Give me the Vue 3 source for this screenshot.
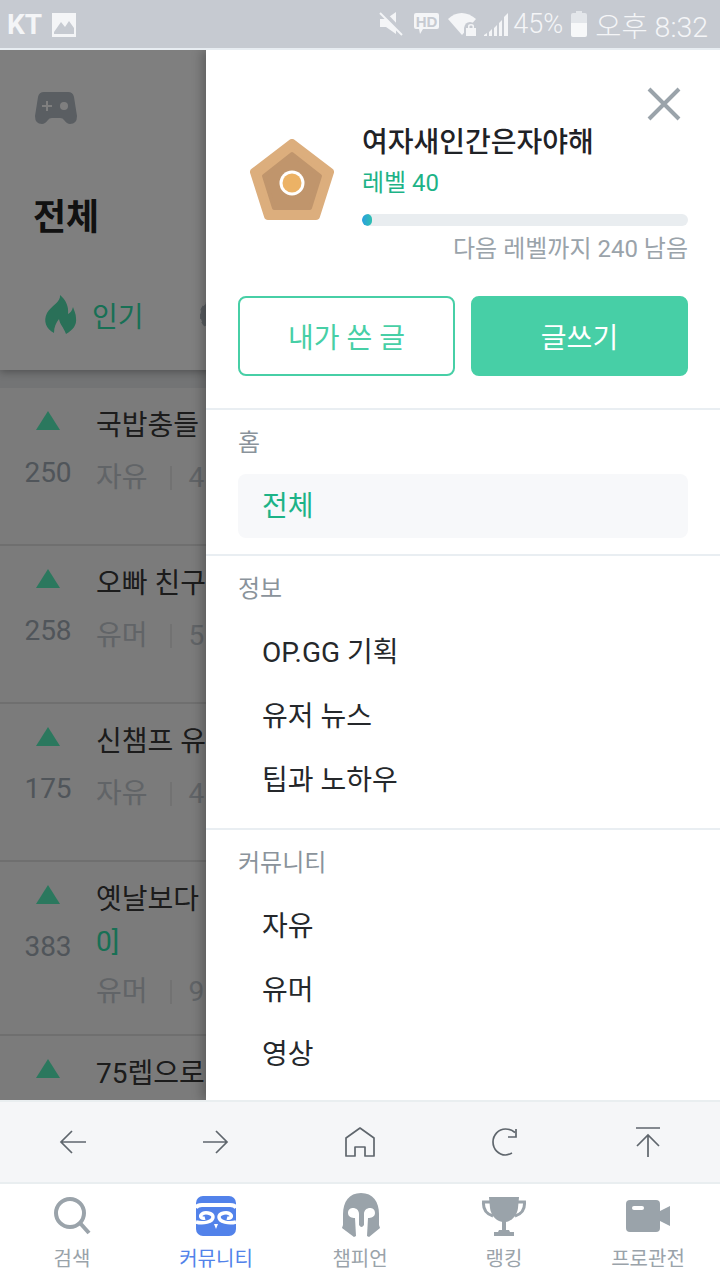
<script setup>
import { ref } from "vue";

const rows = ref([
  { score: 250, title: "국밥충들", board: "자유", count: "4" },
  { score: 258, title: "오빠 친구", board: "유머", count: "5" },
  { score: 175, title: "신챔프 유", board: "자유", count: "4" },
  { score: 383, title: "옛날보다", extra: "0]", board: "유머", count: "9" },
  { score: 0, title: "75렙으로", board: "", count: "" },
]);

const sections = ref([
  { name: "홈", items: [{ label: "전체", active: true }] },
  { name: "정보", items: [{ label: "OP.GG 기획" }, { label: "유저 뉴스" }, { label: "팁과 노하우" }] },
  { name: "커뮤니티", items: [{ label: "자유" }, { label: "유머" }, { label: "영상" }] },
]);

const tabs = ref([
  { id: "search", label: "검색" },
  { id: "community", label: "커뮤니티", active: true },
  { id: "champion", label: "챔피언" },
  { id: "ranking", label: "랭킹" },
  { id: "pro", label: "프로관전" },
]);
</script>

<template>
  <div class="phone">
    <div class="status">
      <span class="carrier">KT</span>
      <svg class="st-pic" width="24" height="24" viewBox="0 0 24 24">
        <path fill-rule="evenodd" fill="#f4f5f7" d="M0 0H24V24H0ZM2 21H22V15L17 8L13 14L9 9L2 19Z" />
      </svg>
      <div class="status-right">
        <svg width="24" height="24" viewBox="0 0 24 24">
          <path fill="#f4f5f7" d="M1 7H7L17 0V22L7 15H1Z" />
          <path stroke="#c6cad1" stroke-width="4" d="M3 -1L24 21" />
          <path stroke="#f4f5f7" stroke-width="2" d="M1 1L23 23" />
        </svg>
        <svg class="st-hd" width="25" height="22" viewBox="0 0 25 22">
          <path fill="#f4f5f7" d="M2 0H23Q25 0 25 2V14Q25 16 23 16H9L6 21L5 16H2Q0 16 0 14V2Q0 0 2 0Z" />
          <text x="12.500" y="13.500" text-anchor="middle" class="hd-text">HD</text>
        </svg>
        <svg class="st-wifi" width="30" height="24" viewBox="0 0 30 24">
          <path fill="#f4f5f7" d="M1 7C9 -1 20 -1 29 7L15 23Z" />
          <path fill="#c6cad1" d="M17 16Q18 10 23 10Q28 10 29 16V24H17Z" />
          <path fill="#f4f5f7" d="M19 16H29V24H19ZM21 16V14Q21 12 24 12Q27 12 27 14V16H25.500V14.500Q25.500 13.500 24 13.500Q22.500 13.500 22.500 14.500V16Z" />
        </svg>
        <svg class="st-signal" width="24" height="24" viewBox="0 0 24 24">
          <path fill="#f4f5f7" d="M0 24H3V21L0 23ZM5 24H8V17L5 20ZM10 24H13V13L10 16ZM15 24H18V8L15 11ZM20 24H24V1L20 5Z" />
        </svg>
        <span class="pct">45%</span>
        <svg width="16" height="26" viewBox="0 0 16 26">
          <path fill="#e3e6ea" d="M5 0H11V2H14Q16 2 16 4V12H0V4Q0 2 2 2H5Z" />
          <path fill="#f7f8f9" d="M0 12H16V24Q16 26 14 26H2Q0 26 0 24Z" />
        </svg>
        <span class="clock">오후 8:32</span>
      </div>
    </div>
    <div class="status-line"></div>

    <div class="stage">
      <div class="page">
        <header class="page-head">
          <svg class="pad" width="42" height="32" viewBox="0 0 42 32">
            <path fill="#b4bcc4" d="M9 0H33Q38 0 39 5L42 24Q42 32 35 32Q32 32 29 28Q28 26 25 26H17Q14 26 13 28Q10 32 7 32Q0 32 0 24L3 5Q4 0 9 0Z" />
            <path fill="#fff" d="M7 13H11V9H13V13H17V15H13V19H11V15H7Z" />
            <circle cx="29" cy="14" r="4" fill="#fff" />
          </svg>
          <h1>전체</h1>
          <div class="page-tabs">
            <svg width="36" height="42" viewBox="0 0 36 42">
              <path fill="#54e0b0" d="M17 1C18 8 8 12 4 19C0 27 3 35 11 39C11 33 13 29 16 25C17 31 20 32 23 40C30 36 34 31 33 24C33 20 31 16 30 13C29 17 27 19 25 20C26 13 23 6 17 1Z" />
            </svg>
            <span class="tab-on">인기</span>
            <svg class="gear" width="30" height="30" viewBox="0 0 30 30">
              <circle cx="15" cy="15" r="11" fill="none" stroke="#b4bcc4" stroke-width="7" />
              <circle cx="15" cy="15" r="14" fill="none" stroke="#b4bcc4" stroke-width="3" stroke-dasharray="5 3" />
            </svg>
          </div>
        </header>
        <div class="list">
          <article v-for="r in rows" :key="r.title" class="row">
            <div class="vote">
              <svg width="24" height="19" viewBox="0 0 24 19"><path fill="#56f0bc" d="M12 0L24 19H0Z" /></svg>
              <span v-if="r.score" class="score">{{ r.score }}</span>
            </div>
            <div class="body">
              <p class="title">{{ r.title }}</p>
              <p v-if="r.extra" class="title extra">{{ r.extra }}</p>
              <p class="meta">
                <span>{{ r.board }}</span><i></i><span>{{ r.count }}</span>
              </p>
            </div>
          </article>
        </div>
      </div>
      <div class="dim"></div>

      <aside class="drawer">
        <svg class="close" width="34" height="34" viewBox="0 0 34 34">
          <path stroke="#9aa3aa" stroke-width="4" d="M2 2L32 32M32 2L2 32" />
        </svg>
        <div class="profile">
          <div class="who">
            <svg class="badge" width="84" height="81" viewBox="0 0 84 81">
              <path fill="#dcae7d" stroke="#dcae7d" stroke-width="8" stroke-linejoin="round" d="M42 4L80 33L66 77H18L4 33Z" />
              <path fill="#c0956c" stroke="#c0956c" stroke-width="4" stroke-linejoin="round" d="M42 15L70 37L60 69H24L14 37Z" />
              <circle cx="42" cy="44" r="12.500" fill="#fff" />
              <circle cx="42" cy="44" r="9.500" fill="#ecb265" />
            </svg>
            <div class="who-text">
              <div class="nick">여자새인간은자야해</div>
              <div class="level">레벨 40</div>
              <div class="bar"><div class="bar-fill" :style="{ width: '10px' }"></div></div>
              <div class="next">다음 레벨까지 240 남음</div>
            </div>
          </div>
          <div class="btns">
            <button class="btn ghost">내가 쓴 글</button>
            <button class="btn solid">글쓰기</button>
          </div>
        </div>
        <section v-for="s in sections" :key="s.name" class="sec">
          <div class="sec-name">{{ s.name }}</div>
          <ul>
            <li v-for="it in s.items" :key="it.label" :class="{ on: it.active }">{{ it.label }}</li>
          </ul>
        </section>
      </aside>
    </div>

    <div class="toolbar">
      <svg width="30" height="30" viewBox="0 0 30 30" fill="none" stroke="#5f666d" stroke-width="1.700">
        <path d="M29 15H4M15 4L4 15L15 26" />
      </svg>
      <svg width="30" height="30" viewBox="0 0 30 30" fill="none" stroke="#5f666d" stroke-width="1.700">
        <path d="M2 15H26M15 4L26 15L15 26" />
      </svg>
      <svg width="30" height="30" viewBox="0 0 30 30" fill="none" stroke="#5f666d" stroke-width="1.700" stroke-linejoin="round">
        <path d="M15 1L29 11V29H20V20H10V29H1V11Z" />
      </svg>
      <svg width="30" height="30" viewBox="0 0 30 30" fill="none" stroke="#5f666d" stroke-width="1.700">
        <path d="M26 5.500C23 3 20 2 16.500 2C9.500 2 4 8 4 15C4 22 9.500 28 16.500 28C19 28 21 27 23 26" />
        <path d="M27 2V10H19" />
      </svg>
      <svg width="30" height="32" viewBox="0 0 30 32" fill="none" stroke="#5f666d" stroke-width="1.700">
        <path d="M3 2H27M15 31V9M4 20L15 9L26 20" />
      </svg>
    </div>

    <nav class="tabbar">
      <div v-for="t in tabs" :key="t.id" class="tab" :class="{ active: t.active }">
        <svg width="48" height="48" viewBox="0 0 48 48">
          <template v-if="t.id === 'search'">
            <circle cx="22" cy="21" r="14" fill="none" stroke="#9aa3aa" stroke-width="4" />
            <path stroke="#9aa3aa" stroke-width="4" d="M32 31L41 41" />
          </template>
          <template v-else-if="t.id === 'community'">
            <rect x="4" y="4" width="40" height="40" rx="7" fill="#5282ea" />
            <path fill="none" stroke="#fff" stroke-width="4" d="M4 16Q5 13 10 13H38Q43 13 44 16" />
            <path fill="none" stroke="#fff" stroke-width="3.500" d="M4 30C11 32 21 30 21 25C21 21 12 19 9 23C8 25 10 27 13 26" />
            <path fill="none" stroke="#fff" stroke-width="3.500" d="M44 30C37 32 27 30 27 25C27 21 36 19 39 23C40 25 38 27 35 26" />
            <path fill="#fff" d="M22 32H26L24 37Z" />
          </template>
          <template v-else-if="t.id === 'champion'">
            <path fill="#9aa3aa" d="M25 1C13 1 7 10 7 22L7 33L6 36L18 45L20 44L19 26C16 26 12 25 12 21C12 17 15 16 17 16C20 16 23 18 23 22L23 33Q25.500 37 28 33L28 22C28 18 31 16 34 16C36 16 39 17 39 21C39 25 35 26 32 26L31 44L33 45L44 36L43 33L43 22C43 10 37 1 25 1Z" />
          </template>
          <template v-else-if="t.id === 'ranking'">
            <path fill="#9aa3aa" d="M9 5H39L38 16C37 24 31 30 24 30C17 30 11 24 10 16Z" />
            <path fill="none" stroke="#9aa3aa" stroke-width="3" d="M10 10H3.500C3 17 6 22 13 24M38 10H44.500C45 17 42 22 35 24" />
            <path fill="#9aa3aa" d="M22 29H26V38H29L30 40H34V44H14V40H18L19 38H22Z" />
          </template>
          <template v-else>
            <rect x="2" y="8" width="34" height="32" rx="4" fill="#9aa3aa" />
            <path fill="#9aa3aa" d="M36 19L46 14V34L36 29Z" />
            <rect x="8" y="14" width="12" height="4" rx="2" fill="#fff" />
          </template>
        </svg>
        <span>{{ t.label }}</span>
      </div>
    </nav>
  </div>
</template>

<style scoped>
.phone {
  width: 720px;
  height: 1280px;
  display: flex;
  flex-direction: column;
  overflow: hidden;
  background: #fff;
  font-family: Roboto, "Noto Sans CJK KR", sans-serif;
}
p, h1, ul { margin: 0; padding: 0; }
li { list-style: none; }

.status {
  height: 48px;
  flex: none;
  background: #c6cad1;
  display: flex;
  align-items: center;
  padding: 0 12px 0 7px;
  color: #f4f5f7;
}
.status-line { height: 2px; flex: none; background: #e8edf2; }
.carrier { font-size: 28px; font-weight: 700; width: 45px; }
.st-pic { margin-top: 1px; }
.status-right { margin-left: auto; display: flex; align-items: center; }
.st-hd { margin-left: 11px; }
.st-wifi { margin-left: 8px; }
.st-signal { margin-left: 7px; }
.hd-text { font: 700 15px "Liberation Sans", sans-serif; fill: #c6cad1; }
.pct { font-size: 27px; font-weight: 300; margin: 0 8px 0 5px; }
.clock { font-size: 28.500px; font-weight: 300; margin-left: 8px; }

.stage { height: 1050px; flex: none; position: relative; overflow: hidden; }
.page { height: 100%; background: #e6e8ea; }
.page-head {
  height: 320px;
  box-sizing: border-box;
  background: #fff;
  padding: 42px 0 0 35px;
  box-shadow: 0 2px 8px rgba(0, 0, 0, 0.3);
  position: relative;
}
.pad { display: block; }
h1 {
  font-size: 36px;
  font-weight: 700;
  line-height: 52px;
  color: #222;
  margin: 68px 0 0 -2px;
}
.page-tabs { display: flex; align-items: center; margin: 49px 0 0 8px; height: 44px; }
.tab-on { font-size: 28px; color: #30e0aa; margin-left: 13px; }
.gear { margin-left: 56px; }
.list { margin-top: 18px; background: #f6f6f6; }
.row {
  display: flex;
  min-height: 158px;
  box-sizing: border-box;
  padding: 15px 0 22px;
  border-bottom: 2px solid #dedede;
}
.vote {
  width: 96px;
  flex: none;
  display: flex;
  flex-direction: column;
  align-items: center;
  padding-top: 8px;
}
.vote svg { display: block; }
.score {
  margin-top: 23px;
  font-size: 28px;
  line-height: 40px;
  color: #a0aab4;
}
.body { width: 110px; overflow: hidden; white-space: nowrap; padding-top: 2px; }
.title { font-size: 28px; line-height: 42px; color: #383838; }
.extra { color: #30e0aa; }
.meta {
  display: flex;
  align-items: center;
  margin-top: 11px;
  font-size: 28px;
  line-height: 40px;
  color: #c2c8ce;
}
.extra + .meta { margin-top: 9px; }
.meta i { width: 2px; height: 24px; background: #e4e4e4; margin: 0 17px 0 22px; }
.dim { position: absolute; inset: 0; background: rgba(0, 0, 0, 0.5); }

.drawer {
  position: absolute;
  top: 0;
  left: 206px;
  right: 0;
  bottom: 0;
  background: #fff;
  box-shadow: -4px 0 10px rgba(0, 0, 0, 0.25);
}
.close { position: absolute; top: 37px; right: 39px; }
.profile { height: 358px; box-sizing: border-box; padding: 71px 32px 0; }
.who { display: flex; }
.badge { flex: none; margin: 18px 28px 0 12px; }
.who-text { flex: 1; min-width: 0; }
.nick { font-size: 28px; font-weight: 500; line-height: 44px; color: #1f2226; }
.level { font-size: 24px; line-height: 36px; color: #1db387; }
.bar { height: 12px; border-radius: 6px; background: #e9edf0; margin-top: 13px; overflow: hidden; }
.bar-fill { height: 100%; border-radius: 6px; background: linear-gradient(90deg, #2a9fe0, #2fc0b0); }
.next { font-size: 24px; line-height: 36px; color: #9aa3aa; text-align: right; margin-top: 5px; }
.btns { display: grid; grid-template-columns: 1fr 1fr; gap: 16px; margin-top: 29px; }
.btn {
  height: 80px;
  box-sizing: border-box;
  border-radius: 8px;
  border: 2px solid #47cfa6;
  font-family: inherit;
  font-size: 28px;
  padding: 0;
}
.ghost { background: #fff; color: #47cfa6; }
.solid { background: #47cfa6; color: #fff; }

.sec { border-top: 2px solid #e9eef2; padding: 14px 32px 16px; }
.sec-name { font-size: 24px; line-height: 38px; color: #8a939b; margin-bottom: 12px; }
.sec li {
  height: 64px;
  line-height: 66px;
  padding-left: 24px;
  font-size: 28px;
  color: #25282b;
  border-radius: 8px;
}
.sec li.on { background: #f7f8fa; color: #1db387; }

.toolbar {
  height: 84px;
  flex: none;
  box-sizing: border-box;
  background: #f5f6f8;
  border-top: 2px solid #e9eef0;
  border-bottom: 2px solid #e9eef0;
  display: grid;
  grid-template-columns: repeat(5, 1fr);
  align-items: center;
  justify-items: center;
}
.tabbar { height: 96px; flex: none; display: grid; grid-template-columns: repeat(5, 1fr); background: #fff; }
.tab {
  display: flex;
  flex-direction: column;
  align-items: center;
  padding-top: 8px;
  font-size: 20px;
  line-height: 30px;
  color: #9aa3aa;
}
.tab svg { display: block; margin-bottom: 4px; }
.tab.active { color: #5282ea; }
</style>
